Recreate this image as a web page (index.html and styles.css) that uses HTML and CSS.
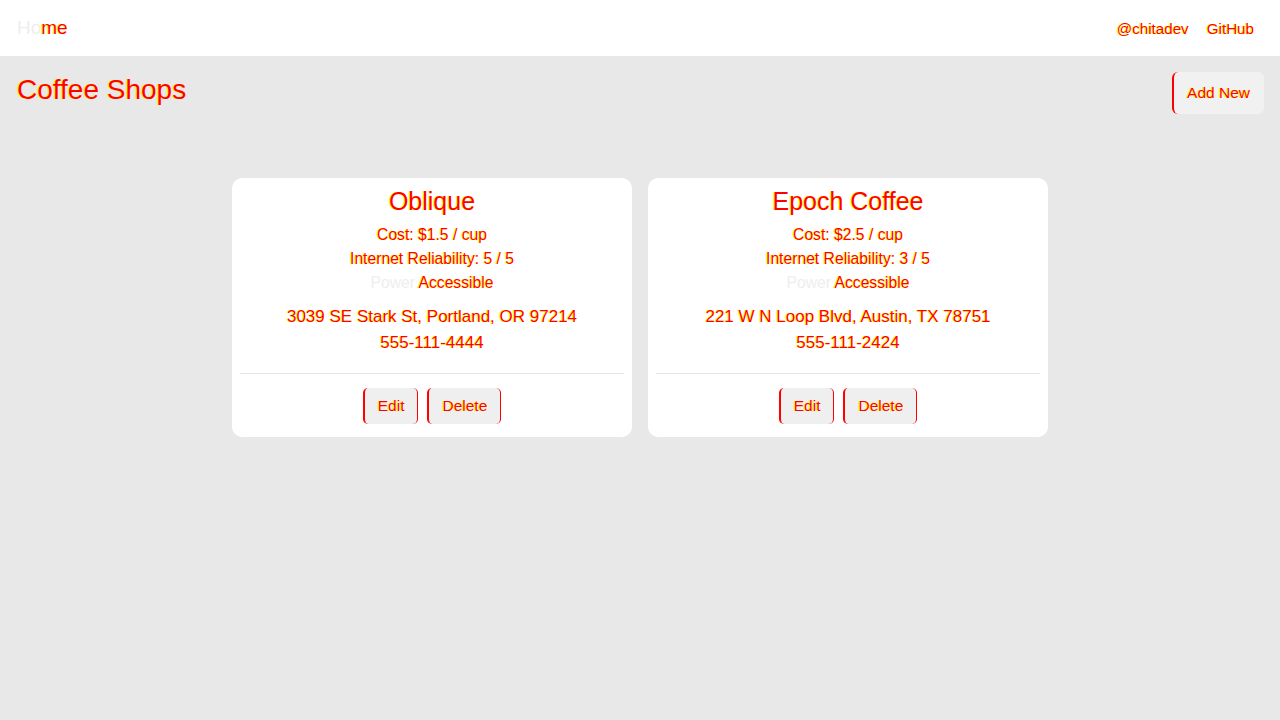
FILE: index.html
```html
<!DOCTYPE html>
<html>
<head>
<meta charset="utf-8">
<link rel="stylesheet" href="styles.css">
</head>
<body>
<header class="nav">
  <a class="home">Ho<span class="hl">me</span></a>
  <div class="links">
    <a class="link hl">@chitadev</a>
    <a class="link hl">GitHub</a>
  </div>
</header>
<main class="main">
  <div class="top">
    <h1 class="title hl">Coffee Shops</h1>
    <button class="btn add hl">Add New</button>
  </div>
  <div class="cards">
    <div class="card">
      <div class="body">
        <h2 class="name hl">Oblique</h2>
        <p class="meta hl">Cost: $1.5 / cup</p>
        <p class="meta hl">Internet Reliability: 5 / 5</p>
        <p class="meta faint">Power <span class="hl">Accessible</span></p>
        <p class="addr hl">3039 SE Stark St, Portland, OR 97214</p>
        <p class="phone hl">555-111-4444</p>
      </div>
      <div class="actions">
        <button class="btn hl">Edit</button>
        <button class="btn hl">Delete</button>
      </div>
    </div>
    <div class="card">
      <div class="body">
        <h2 class="name hl">Epoch Coffee</h2>
        <p class="meta hl">Cost: $2.5 / cup</p>
        <p class="meta hl">Internet Reliability: 3 / 5</p>
        <p class="meta faint">Power <span class="hl">Accessible</span></p>
        <p class="addr hl">221 W N Loop Blvd, Austin, TX 78751</p>
        <p class="phone hl">555-111-2424</p>
      </div>
      <div class="actions">
        <button class="btn hl">Edit</button>
        <button class="btn hl">Delete</button>
      </div>
    </div>
  </div>
</main>
</body>
</html>
```
FILE: styles.css
```css
* { box-sizing: border-box; }
html, body { margin: 0; padding: 0; }
body {
  background: #e8e8e8;
  font-family: "Liberation Sans", Arial, sans-serif;
  width: 1280px;
  height: 720px;
}
.hl {
  color: #ff0000;
  text-shadow: -1px 0 #ffff00;
}
.faint { color: #eeeeee; }
.nav {
  height: 56px;
  background: #ffffff;
  display: flex;
  align-items: center;
  justify-content: space-between;
  padding: 0 26px 0 17px;
}
.home {
  font-size: 19px;
  color: #eeeeee;
}
.links {
  display: flex;
  gap: 18px;
  font-size: 15.2px;
}
.main {
  padding: 16px 16px 0 17px;
}
.top {
  display: flex;
  justify-content: space-between;
  align-items: flex-start;
}
.title {
  margin: 0;
  font-size: 28px;
  font-weight: normal;
  line-height: 34px;
  padding-top: 1px;
}
.btn {
  font-family: "Liberation Sans", Arial, sans-serif;
  font-size: 15.5px;
  background: #efefef;
  border: 0;
  border-left: 2px solid #ff0000;
  border-right: 1px solid #ff0000;
  border-radius: 5px;
  height: 36px;
  padding: 0 13px 0 13px;
}
.add {
  height: 42px;
  border-right: 0;
  background: #f1f1f1;
  border-radius: 6px;
  padding: 0 14px 0 13px;
}
.cards {
  display: flex;
  justify-content: center;
  gap: 16px;
  margin-top: 64px;
  padding-right: 1px;
}
.card {
  width: 400px;
  height: 259px;
  background: #ffffff;
  border-radius: 10px;
  padding: 0 8px;
  text-align: center;
  display: flex;
  flex-direction: column;
}
.body {
  padding-top: 8px;
  border-bottom: 1px solid #e6e6e6;
  height: 196px;
}
.name {
  margin: 0;
  font-size: 25px;
  font-weight: normal;
  line-height: 30px;
}
.meta {
  margin: 0;
  font-size: 15.7px;
  line-height: 24px;
}
.name + .meta { margin-top: 7px; }
.addr {
  margin: 9px 0 0;
  font-size: 17px;
  line-height: 26px;
}
.phone {
  margin: 0;
  font-size: 17px;
  line-height: 26px;
}
.actions {
  display: flex;
  justify-content: center;
  gap: 9px;
  padding-top: 14px;
}
```
